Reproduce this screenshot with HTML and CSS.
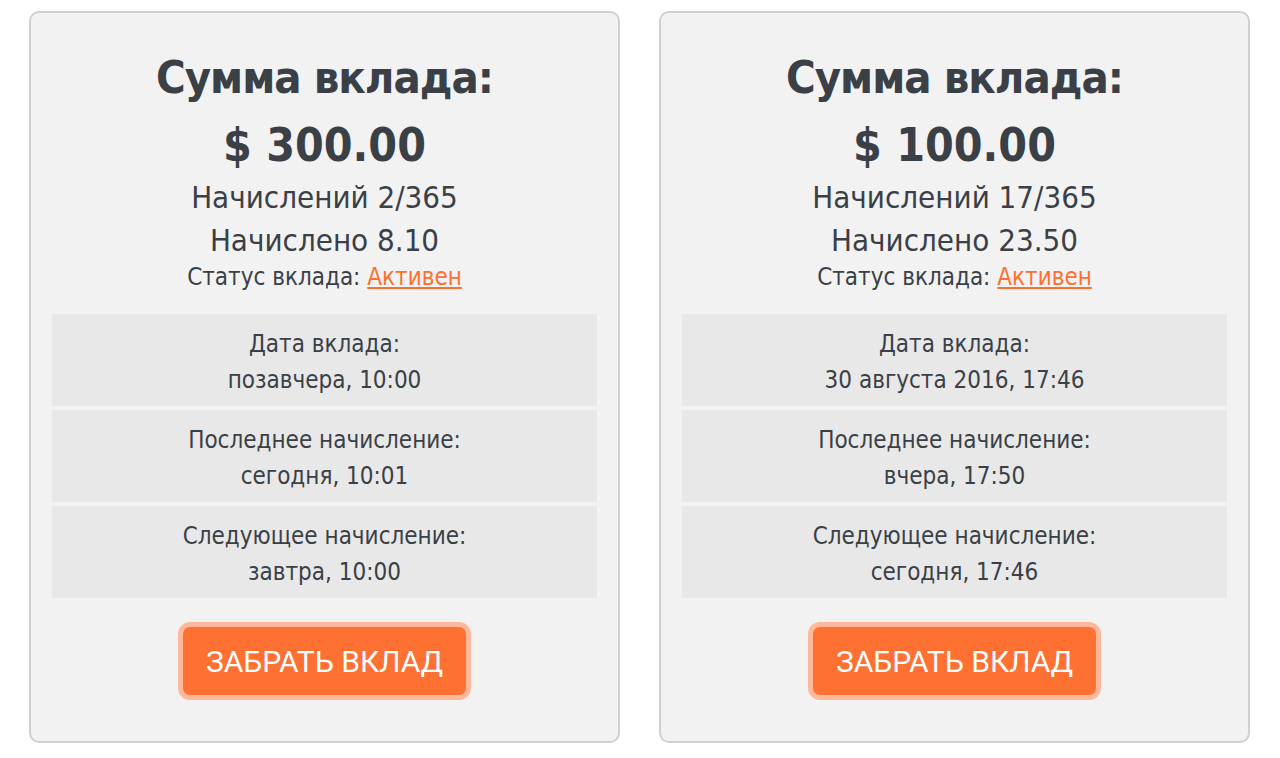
FILE: index.html
```html
<!DOCTYPE html>
<html lang="ru">
<head>
    <meta charset="UTF-8">
    <title>Вклады</title>
    <link rel="stylesheet" href="styles.css">
</head>
<body>
    <div class="deposits">
        <div class="deposit">
            <h2 class="deposit-title">Сумма вклада:</h2>
            <div class="deposit-sum">$ 300.00</div>
            <div class="deposit-line">Начислений 2/365</div>
            <div class="deposit-line">Начислено 8.10</div>
            <div class="deposit-status">Статус вклада: <a href="#">Активен</a></div>
            <div class="deposit-info">
                <div class="info-row">Дата вклада:<br>позавчера, 10:00</div>
                <div class="info-row">Последнее начисление:<br>сегодня, 10:01</div>
                <div class="info-row">Следующее начисление:<br>завтра, 10:00</div>
            </div>
            <button class="take-btn">ЗАБРАТЬ ВКЛАД</button>
        </div>

        <div class="deposit">
            <h2 class="deposit-title">Сумма вклада:</h2>
            <div class="deposit-sum">$ 100.00</div>
            <div class="deposit-line">Начислений 17/365</div>
            <div class="deposit-line">Начислено 23.50</div>
            <div class="deposit-status">Статус вклада: <a href="#">Активен</a></div>
            <div class="deposit-info">
                <div class="info-row">Дата вклада:<br>30 августа 2016, 17:46</div>
                <div class="info-row">Последнее начисление:<br>вчера, 17:50</div>
                <div class="info-row">Следующее начисление:<br>сегодня, 17:46</div>
            </div>
            <button class="take-btn">ЗАБРАТЬ ВКЛАД</button>
        </div>
    </div>
</body>
</html>
```

FILE: styles.css
```css
body {
    margin: 0;
    background: #fff;
    font-family: "DejaVu Sans Condensed", "DejaVu Sans", sans-serif;
    color: #3a4046;
}
.deposits {
    display: flex;
    gap: 39px;
    padding: 11px 0 0 29px;
}
.deposit {
    width: 545px;
    padding: 21px 21px 41px;
    background: #f2f2f2;
    border: 2px solid #d0d0d0;
    border-radius: 10px;
    text-align: center;
}
.deposit-title {
    margin: 20px 0 0;
    font-size: 45px;
    line-height: 48px;
    letter-spacing: -1px;
    font-weight: bold;
}
.deposit-sum {
    margin-top: 18px;
    font-size: 46px;
    line-height: 50px;
    font-weight: bold;
}
.deposit-sum + .deposit-line {
    margin-top: 6px;
}
.deposit-line {
    font-size: 31px;
    line-height: 43px;
}
.deposit-status {
    font-size: 24px;
    line-height: 30px;
}
.deposit-status a {
    color: #ff6f2e;
}
.deposit-info {
    display: flex;
    flex-direction: column;
    gap: 4px;
    margin-top: 22px;
}
.info-row {
    background: #e8e8e8;
    padding: 12px 0 8px;
    font-size: 24px;
    line-height: 36px;
}
.take-btn {
    margin-top: 24px;
    padding: 0 23px;
    height: 78px;
    background: #ff7033;
    border: 5px solid #ffb89a;
    border-radius: 12px;
    color: #fff;
    font-family: Roboto, sans-serif;
    font-size: 30px;
    cursor: pointer;
}
```
